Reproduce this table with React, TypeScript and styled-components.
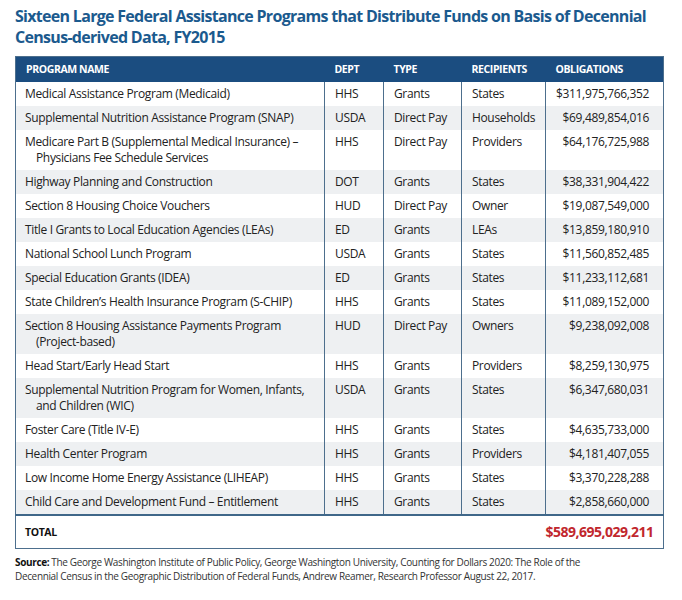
import React from "react";
import styled, { createGlobalStyle } from "styled-components";

const Global = createGlobalStyle`
  html, body { margin: 0; padding: 0; background: #ffffff; }
  body { font-family: "Open Sans", "Liberation Sans", sans-serif; }
  *, *::before, *::after { box-sizing: border-box; }
`;

const Page = styled.div`
  width: 682px;
  padding: 6px 15px 0 15px;
`;

const Title = styled.h1`
  margin: 0 0 8px 0;
  font-family: "Open Sans", sans-serif;
  font-weight: 700;
  font-size: 16px;
  line-height: 21px;
  letter-spacing: -0.7px;
  color: #1b5a8e;
`;

const Table = styled.table`
  width: 648px;
  border-collapse: collapse;
  table-layout: fixed;
  border: 1.5px solid #4d6f8d;
  font-size: 12px;
  color: #222;
`;

const HeadCell = styled.th<{ $w: number }>`
  width: ${(p) => p.$w}px;
  background: #1b4d80;
  color: #ffffff;
  font-weight: 700;
  font-size: 10.5px;
  letter-spacing: -0.4px;
  text-align: left;
  padding: 0 0 0 10px;
  height: 25px;
`;

const Row = styled.tr<{ $alt: boolean }>`
  background: ${(p) => (p.$alt ? "#eef0f2" : "#ffffff")};
`;

const Cell = styled.td<{ $right?: boolean; $first?: boolean }>`
  vertical-align: top;
  padding: 4px ${(p) => (p.$right ? "14px" : "2px")} 4px ${(p) => (p.$first ? "20px" : "10px")};
  text-indent: ${(p) => (p.$first ? "-11px" : "0")};
  line-height: 16px;
  letter-spacing: -0.35px;
  text-align: ${(p) => (p.$right ? "right" : "left")};
  border-left: ${(p) => (p.$first ? "none" : "1.5px solid #4d6f8d")};
  white-space: nowrap;
`;

const Indented = styled.span`
  display: block;
  text-indent: 0;
`;

const TotalRow = styled.tr`
  border-top: 2px solid #3f6789;
  background: #ffffff;
`;

const TotalLabel = styled.td`
  padding: 0 0 0 9px;
  height: 34px;
  font-weight: 700;
  font-size: 10.5px;
  letter-spacing: -0.4px;
  color: #111;
`;

const TotalValue = styled.td`
  padding: 0 11px 0 0;
  text-align: right;
  font-weight: 700;
  font-size: 14px;
  letter-spacing: -0.5px;
  color: #c1272d;
`;

const Source = styled.p`
  margin: 6px 0 0 0;
  font-size: 10px;
  line-height: 14px;
  letter-spacing: -0.35px;
  color: #333;
  width: 600px;
`;

const Bold = styled.b`
  font-weight: 700;
  color: #111;
  margin-right: 2px;
`;

type Item = [string[], string, string, string, string];

const rows: Item[] = [
  [["Medical Assistance Program (Medicaid)"], "HHS", "Grants", "States", "$311,975,766,352"],
  [["Supplemental Nutrition Assistance Program (SNAP)"], "USDA", "Direct Pay", "Households", "$69,489,854,016"],
  [["Medicare Part B (Supplemental Medical Insurance) –", "Physicians Fee Schedule Services"], "HHS", "Direct Pay", "Providers", "$64,176,725,988"],
  [["Highway Planning and Construction"], "DOT", "Grants", "States", "$38,331,904,422"],
  [["Section 8 Housing Choice Vouchers"], "HUD", "Direct Pay", "Owner", "$19,087,549,000"],
  [["Title I Grants to Local Education Agencies (LEAs)"], "ED", "Grants", "LEAs", "$13,859,180,910"],
  [["National School Lunch Program"], "USDA", "Grants", "States", "$11,560,852,485"],
  [["Special Education Grants (IDEA)"], "ED", "Grants", "States", "$11,233,112,681"],
  [["State Children’s Health Insurance Program (S-CHIP)"], "HHS", "Grants", "States", "$11,089,152,000"],
  [["Section 8 Housing Assistance Payments Program", "(Project-based)"], "HUD", "Direct Pay", "Owners", "$9,238,092,008"],
  [["Head Start/Early Head Start"], "HHS", "Grants", "Providers", "$8,259,130,975"],
  [["Supplemental Nutrition Program for Women, Infants,", "and Children (WIC)"], "USDA", "Grants", "States", "$6,347,680,031"],
  [["Foster Care (Title IV-E)"], "HHS", "Grants", "States", "$4,635,733,000"],
  [["Health Center Program"], "HHS", "Grants", "Providers", "$4,181,407,055"],
  [["Low Income Home Energy Assistance (LIHEAP)"], "HHS", "Grants", "States", "$3,370,228,288"],
  [["Child Care and Development Fund – Entitlement"], "HHS", "Grants", "States", "$2,858,660,000"],
];

export default function App() {
  return (
    <Page>
      <Global />
      <Title>
        Sixteen Large Federal Assistance Programs that Distribute Funds on Basis of Decennial
        Census-derived Data, FY2015
      </Title>
      <Table>
        <thead>
          <tr>
            <HeadCell $w={309}>PROGRAM NAME</HeadCell>
            <HeadCell $w={59}>DEPT</HeadCell>
            <HeadCell $w={78}>TYPE</HeadCell>
            <HeadCell $w={84}>RECIPIENTS</HeadCell>
            <HeadCell $w={118}>OBLIGATIONS</HeadCell>
          </tr>
        </thead>
        <tbody>
          {rows.map((r, i) => (
            <Row key={i} $alt={i % 2 === 1}>
              <Cell $first>
                {r[0][0]}
                {r[0][1] && <Indented>{r[0][1]}</Indented>}
              </Cell>
              <Cell>{r[1]}</Cell>
              <Cell>{r[2]}</Cell>
              <Cell>{r[3]}</Cell>
              <Cell $right>{r[4]}</Cell>
            </Row>
          ))}
          <TotalRow>
            <TotalLabel colSpan={4}>TOTAL</TotalLabel>
            <TotalValue>$589,695,029,211</TotalValue>
          </TotalRow>
        </tbody>
      </Table>
      <Source>
        <Bold>Source:</Bold>The George Washington Institute of Public Policy, George Washington
        University, Counting for Dollars 2020: The Role of the Decennial Census in the Geographic
        Distribution of Federal Funds, Andrew Reamer, Research Professor August 22, 2017.
      </Source>
    </Page>
  );
}
